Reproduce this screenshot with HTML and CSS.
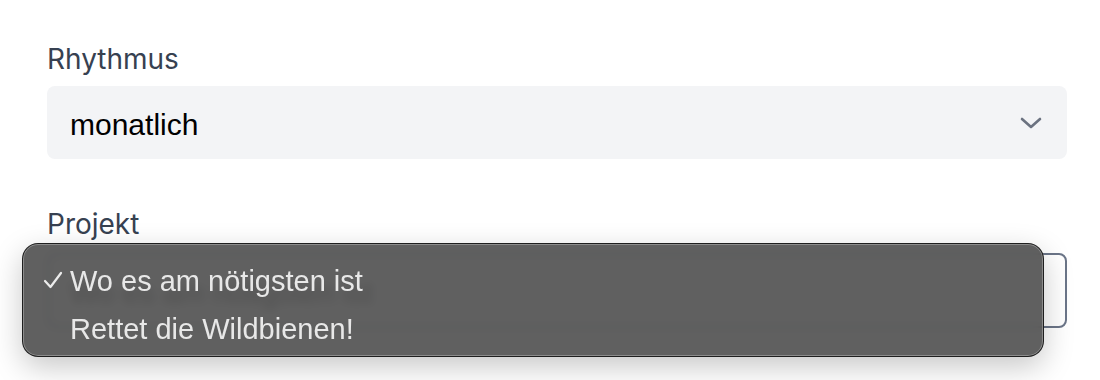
FILE: index.html
```html
<!DOCTYPE html>
<html lang="de">
<head>
    <meta charset="UTF-8">
    <title>Spende - Rhythmus und Projekt</title>
    <link rel="stylesheet" href="styles.css">
</head>
<body>
    <!-- Donation form -->
    <div class="form">
        <div class="field">
            <label class="label">Rhythmus</label>
            <div class="select filled">
                <span class="value">monatlich</span>
                <svg class="chevron" width="22" height="12" viewBox="0 0 22 12">
                    <path d="M2 2 L11 10 L20 2" fill="none" stroke="#6b7280" stroke-width="2.6" stroke-linecap="round" stroke-linejoin="round"/>
                </svg>
            </div>
        </div>

        <div class="field project">
            <label class="label">Projekt</label>
            <div class="select outlined">
                <span class="value">Wo es am nötigsten ist</span>
            </div>

            <!-- Open dropdown menu -->
            <ul class="menu">
                <li class="item selected">
                    <svg class="check" width="20" height="18" viewBox="0 0 20 18">
                        <path d="M2 10 L7.5 16 L18 2" fill="none" stroke="#ececec" stroke-width="2.2" stroke-linecap="round" stroke-linejoin="round"/>
                    </svg>
                    Wo es am nötigsten ist
                </li>
                <li class="item">Rettet die Wildbienen!</li>
            </ul>
        </div>
    </div>
</body>
</html>
```

FILE: styles.css
```css
/* General styles */
body {
    margin: 0;
    padding: 0;
    min-height: 380px;
    background-color: #fff;
    font-family: Inter, "Noto Sans", sans-serif;
}

.form {
    padding: 42px 33px 60px 47px;
}

.field {
    position: relative;
}

.label {
    display: block;
    font-size: 28px;
    line-height: 34px;
    color: #374151;
    margin-bottom: 10px;
}

.select {
    display: flex;
    align-items: center;
    justify-content: space-between;
    box-sizing: border-box;
    height: 73px;
    padding: 4px 25px 0 23px;
    border-radius: 8px;
    font-family: "Liberation Sans", Arial, sans-serif;
    font-size: 30px;
    color: #000;
}

.filled {
    background-color: #f3f4f6;
}

.chevron {
    display: block;
    margin-top: -4px;
}

/* Second field */
.project {
    margin-top: 48px;
}

.project .label {
    margin-bottom: 12px;
}

.outlined {
    height: 75px;
    border: 2px solid #6b7588;
    background-color: #fff;
    padding-left: 21px;
    color: #333;
}

/* Dropdown menu over the select */
.menu {
    position: absolute;
    left: -25px;
    top: 36px;
    width: 1022px;
    height: 114px;
    box-sizing: border-box;
    margin: 0;
    padding: 13px 0 0;
    list-style: none;
    background-color: rgba(82, 82, 82, 0.92);
    backdrop-filter: blur(5px);
    border: 1px solid rgba(20, 20, 20, 0.85);
    border-radius: 16px;
    box-shadow: inset 0 0 0 1px rgba(255, 255, 255, 0.28),
                0 10px 30px rgba(0, 0, 0, 0.22);
}

.item {
    position: relative;
    height: 48px;
    line-height: 48px;
    padding-left: 47px;
    font-family: "Liberation Sans", Arial, sans-serif;
    font-size: 29px;
    color: #e8e8e8;
}

.check {
    position: absolute;
    left: 20px;
    top: 14px;
}
```
